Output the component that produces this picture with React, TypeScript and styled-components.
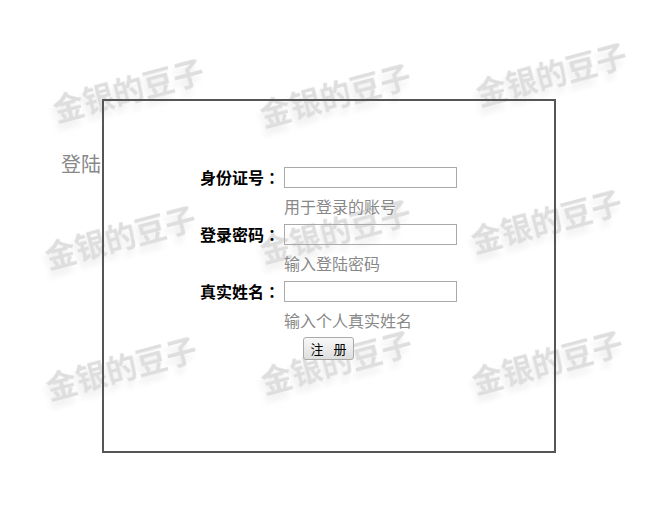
import React from "react";
import styled, { createGlobalStyle } from "styled-components";

const Global = createGlobalStyle`
  html, body { margin: 0; padding: 0; background: #fff; }
  body { font-family: "Noto Sans CJK SC", "Liberation Sans", sans-serif; }
`;

const Page = styled.div`
  position: relative;
  width: 662px;
  height: 513px;
  overflow: hidden;
  display: flex;
  align-items: flex-start;
  padding: 99px 0 0 61px;
  box-sizing: border-box;
`;

const Title = styled.div`
  position: relative;
  z-index: 1;
  width: 41px;
  margin-top: 50px;
  font-size: 20px;
  line-height: 29px;
  color: #888;
  white-space: nowrap;
`;

const Panel = styled.form`
  position: relative;
  z-index: 1;
  width: 454px;
  height: 354px;
  box-sizing: border-box;
  border: 2px solid #555;
  padding: 66px 0 0 96px;
  display: flex;
  flex-direction: column;
`;

const Field = styled.div`
  display: grid;
  grid-template-columns: 80px 173px;
  column-gap: 4px;
  height: 57px;
  align-content: start;
`;

const Label = styled.label`
  font-size: 16px;
  font-weight: 700;
  line-height: 20px;
  color: #000;
  white-space: nowrap;
`;

const Colon = styled.span`
  font-family: "Noto Sans CJK TC", sans-serif;
`;

const Input = styled.input`
  width: 173px;
  height: 21px;
  box-sizing: border-box;
  border: 1px solid #aaa;
  background: transparent;
  padding: 0 2px;
  margin: 0;
  outline: none;
`;

const Hint = styled.div`
  grid-column: 2;
  margin-top: 7px;
  font-size: 16px;
  line-height: 22px;
  color: #888;
  white-space: nowrap;
`;

const Submit = styled.button`
  align-self: flex-start;
  margin: -1px 0 0 103px;
  width: 51px;
  height: 23px;
  padding: 0;
  box-sizing: border-box;
  border: 1px solid #aaa;
  border-radius: 3px;
  background: linear-gradient(#f8f8f8, #dedede);
  font-family: inherit;
  font-size: 13px;
  line-height: 20px;
  word-spacing: 2px;
  color: #000;
  white-space: pre;
`;

const Mark = styled.div<{ $x: number; $y: number }>`
  position: absolute;
  z-index: 0;
  left: ${(p) => p.$x}px;
  top: ${(p) => p.$y}px;
  width: 160px;
  margin-left: -80px;
  margin-top: -20px;
  text-align: center;
  line-height: 40px;
  font-size: 31px;
  font-weight: 700;
  color: #dedede;
  text-shadow: -4px 6px 6px rgba(0, 0, 0, 0.07);
  filter: blur(0.6px);
  transform: rotate(-15deg);
  white-space: nowrap;
  pointer-events: none;
`;

const marks = [
  [128, 89],
  [335, 94],
  [551, 73],
  [120, 236],
  [335, 230],
  [546, 220],
  [121, 367],
  [336, 361],
  [547, 361],
];

const fields = [
  ["身份证号", "用于登录的账号", "text"],
  ["登录密码", "输入登陆密码", "password"],
  ["真实姓名", "输入个人真实姓名", "text"],
];

export default function App() {
  return (
    <Page>
      <Global />
      {marks.map(([x, y]) => (
        <Mark key={`${x}-${y}`} $x={x} $y={y}>金银的豆子</Mark>
      ))}
      <Title>登陆</Title>
      <Panel onSubmit={(e) => e.preventDefault()}>
        {fields.map(([label, hint, type]) => (
          <Field key={label}>
            <Label>{label}<Colon>：</Colon></Label>
            <Input type={type} aria-label={label} />
            <Hint>{hint}</Hint>
          </Field>
        ))}
        <Submit type="submit">注  册</Submit>
      </Panel>
    </Page>
  );
}
